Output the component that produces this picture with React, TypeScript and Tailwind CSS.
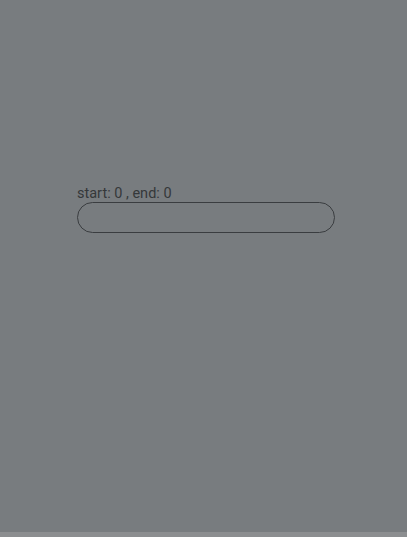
export default function App() {
  return (
    <div className="w-[407px] h-[537px] bg-[#787c7f] flex flex-col overflow-hidden" style={{ fontFamily: 'Roboto, "Noto Sans", sans-serif' }}>
      <div className="flex-1 flex flex-col pt-[186px] pl-[77px]">
        <div className="text-[14.5px] leading-[16px] text-[#35383a]">start: 0 , end: 0</div>
        <div className="w-[258px] h-[31px] rounded-full border border-[#3a3d40]"></div>
      </div>
      <div className="h-[5px] bg-[#8c8e90]"></div>
    </div>
  );
}
